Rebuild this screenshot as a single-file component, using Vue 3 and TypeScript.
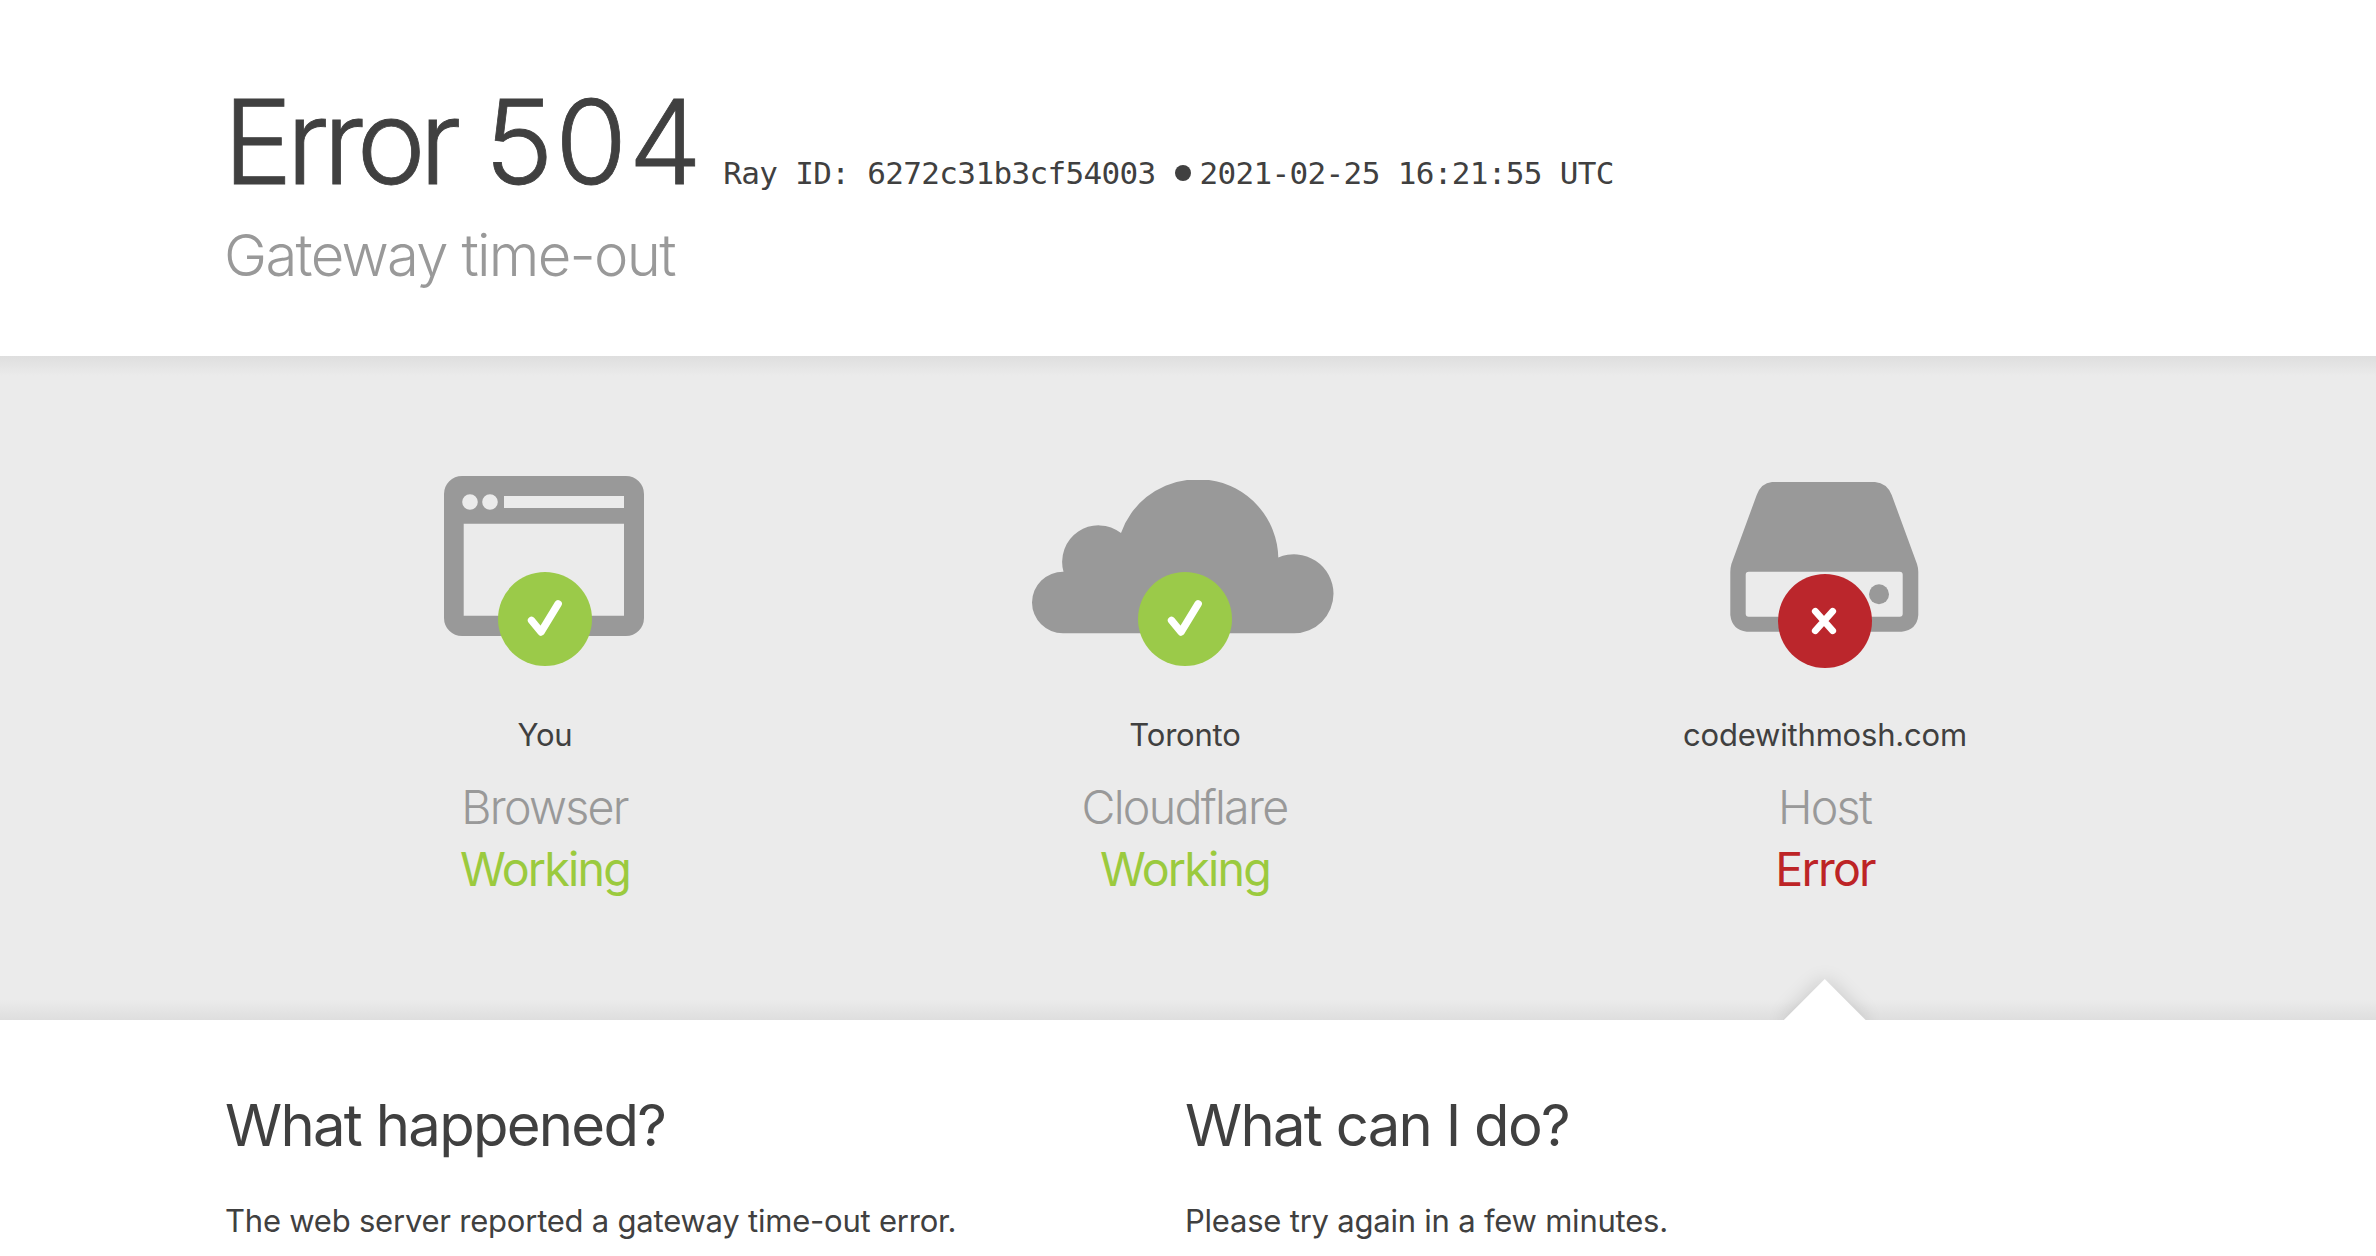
<template>
  <div class="error-page">
    <header class="header">
      <div class="title-row">
        <h1 class="title">Error <span class="code">504</span></h1>
        <div class="meta">
          <span>Ray ID: {{ rayId }}</span>
          <span class="bullet" />
          <span>{{ timestamp }}</span>
        </div>
      </div>
      <h2 class="subtitle">Gateway time-out</h2>
    </header>

    <section class="status-band">
      <div v-for="item in statuses" :key="item.kind" class="status" :class="{ failed: !item.ok }">
        <svg class="status-icon" viewBox="0 0 320 200" aria-hidden="true">
          <path
            v-if="item.kind === 'Browser'"
            fill="#999"
            fill-rule="evenodd"
            d="M77 6H241a18 18 0 0 1 18 18V148a18 18 0 0 1-18 18H77a18 18 0 0 1-18-18V24a18 18 0 0 1 18-18zM119 26V38H239V26zM78.7 53.7V145.7H239V53.7zM77.2 32a7.8 7.8 0 1 0 15.6 0a7.8 7.8 0 1 0-15.6 0zM97.2 32a7.8 7.8 0 1 0 15.6 0a7.8 7.8 0 1 0-15.6 0z"
          />
          <path
            v-else-if="item.kind === 'Cloudflare'"
            fill="#999"
            d="M38 163.3A31 31 0 0 1 7 132.5A31 31 0 0 1 38.5 101.7A36.5 36.5 0 0 1 96 63A80 80 0 0 1 162 10H184A80 80 0 0 1 253.3 87.5A39.6 39.6 0 0 1 308.5 123.7A39.6 39.6 0 0 1 269 163.3z"
          />
          <g v-else fill="#999">
            <path
              fill-rule="evenodd"
              d="M107 12H210Q222 13 226.7 25L252 94Q253.3 98 253.3 102V145Q252 160 236.7 161.7H81.7Q67 160 65.3 145V102Q65.3 98 66.4 94L91.7 25Q96 13 107 12zM83.7 101.7Q80.7 101.7 80.7 104.7V143.7Q80.7 146.7 83.7 146.7H234.7Q237.7 146.7 237.7 143.7V104.7Q237.7 101.7 234.7 101.7z"
            />
            <circle cx="214" cy="124.3" r="10" />
          </g>

          <g v-if="item.ok">
            <circle cx="160" cy="149" r="47" fill="#9bca49" />
            <path class="mark" stroke-width="7.4" d="M146.5 150.3L156 162L173.2 133.8" />
          </g>
          <g v-else>
            <circle cx="160" cy="151" r="47" fill="#bb262c" />
            <path class="mark" stroke-width="6.8" d="M150.3 141.3L167.7 160.7M167.7 141.3L150.3 160.7" />
          </g>
        </svg>
        <span class="status-name">{{ item.name }}</span>
        <h3 class="status-kind">{{ item.kind }}</h3>
        <span class="status-text">{{ item.ok ? 'Working' : 'Error' }}</span>
      </div>
    </section>

    <section class="details">
      <div v-for="block in details" :key="block.heading" class="detail">
        <h2 class="detail-heading">{{ block.heading }}</h2>
        <p class="detail-text">{{ block.text }}</p>
      </div>
    </section>
  </div>
</template>

<script setup lang="ts">
  interface Status {
    name: string
    kind: 'Browser' | 'Cloudflare' | 'Host'
    ok: boolean
  }

  const rayId = '6272c31b3cf54003'
  const timestamp = '2021-02-25 16:21:55 UTC'

  const statuses: Status[] = [
    { name: 'You', kind: 'Browser', ok: true },
    { name: 'Toronto', kind: 'Cloudflare', ok: true },
    { name: 'codewithmosh.com', kind: 'Host', ok: false },
  ]

  const details = [
    { heading: 'What happened?', text: 'The web server reported a gateway time-out error.' },
    { heading: 'What can I do?', text: 'Please try again in a few minutes.' },
  ]
</script>

<style>
  body {
    margin: 0;
    background: #fff;
    overflow: hidden;
  }
</style>

<style scoped>
  .error-page {
    height: 1256px;
    overflow: hidden;
    background: #fff;
    color: #404040;
    font-family: Inter, 'Liberation Sans', sans-serif;
  }

  h1,
  h2,
  h3,
  p {
    margin: 0;
    font-weight: 400;
  }

  .header {
    box-sizing: border-box;
    height: 356px;
    padding: 82px 225px 0;
  }

  .title-row {
    display: flex;
    align-items: baseline;
    height: 120px;
  }

  .title {
    margin-left: -2px;
    font-size: 117px;
    font-weight: 300;
    letter-spacing: -6.5px;
    line-height: 120px;
    white-space: nowrap;
    -webkit-text-stroke: 0.8px #404040;
  }

  .code {
    margin-left: 3px;
    letter-spacing: 1.2px;
  }

  .meta {
    display: flex;
    align-items: baseline;
    margin-left: 20px;
    font-family: 'DejaVu Sans Mono', monospace;
    font-size: 31px;
    letter-spacing: -0.65px;
    line-height: 40px;
    white-space: nowrap;
  }

  .bullet {
    width: 16px;
    height: 16px;
    margin: 0 9px 0 19px;
    border-radius: 50%;
    background: #404040;
    transform: translateY(-3px);
  }

  .subtitle {
    margin-top: 18px;
    margin-left: -1px;
    color: #999;
    font-size: 58px;
    font-weight: 300;
    letter-spacing: -1.72px;
    line-height: 70px;
  }

  .status-band {
    display: flex;
    box-sizing: border-box;
    height: 664px;
    padding: 114px 0 0 225px;
    background: linear-gradient(#dedede, #ebebeb 3%, #ebebeb 97%, #dedede);
  }

  .status {
    position: relative;
    display: flex;
    flex-direction: column;
    align-items: center;
    width: 640px;
    height: 550px;
    overflow: hidden;
  }

  .status-icon {
    width: 320px;
    height: 200px;
  }

  .mark {
    fill: none;
    stroke: #fff;
    stroke-linecap: round;
    stroke-linejoin: round;
  }

  .status-name {
    margin-top: 45px;
    font-size: 31px;
    letter-spacing: -0.2px;
    line-height: 40px;
  }

  .status-kind {
    margin-top: 22px;
    margin-right: 1px;
    color: #999;
    font-size: 46.6px;
    font-weight: 300;
    letter-spacing: -1.75px;
    line-height: 60px;
  }

  .status-text {
    margin-top: 2px;
    color: #9bca3e;
    font-size: 46.6px;
    letter-spacing: -1.8px;
    line-height: 60px;
  }

  .failed .status-text {
    color: #bd2426;
  }

  /* notch pointing from the details up to the failing hop */
  .failed::after {
    content: '';
    position: absolute;
    bottom: -28.5px;
    left: 290.5px;
    width: 57.5px;
    height: 57.5px;
    background: #fff;
    box-shadow: 0 0 20px rgba(0, 0, 0, 0.16);
    transform: rotate(45deg);
  }

  .details {
    display: flex;
    padding: 70px 0 0 225px;
  }

  .detail {
    width: 960px;
  }

  .detail-heading {
    font-size: 58px;
    letter-spacing: -1.72px;
    line-height: 70px;
  }

  .detail-text {
    margin-top: 41px;
    font-size: 31px;
    letter-spacing: -0.22px;
    line-height: 40px;
  }
</style>
